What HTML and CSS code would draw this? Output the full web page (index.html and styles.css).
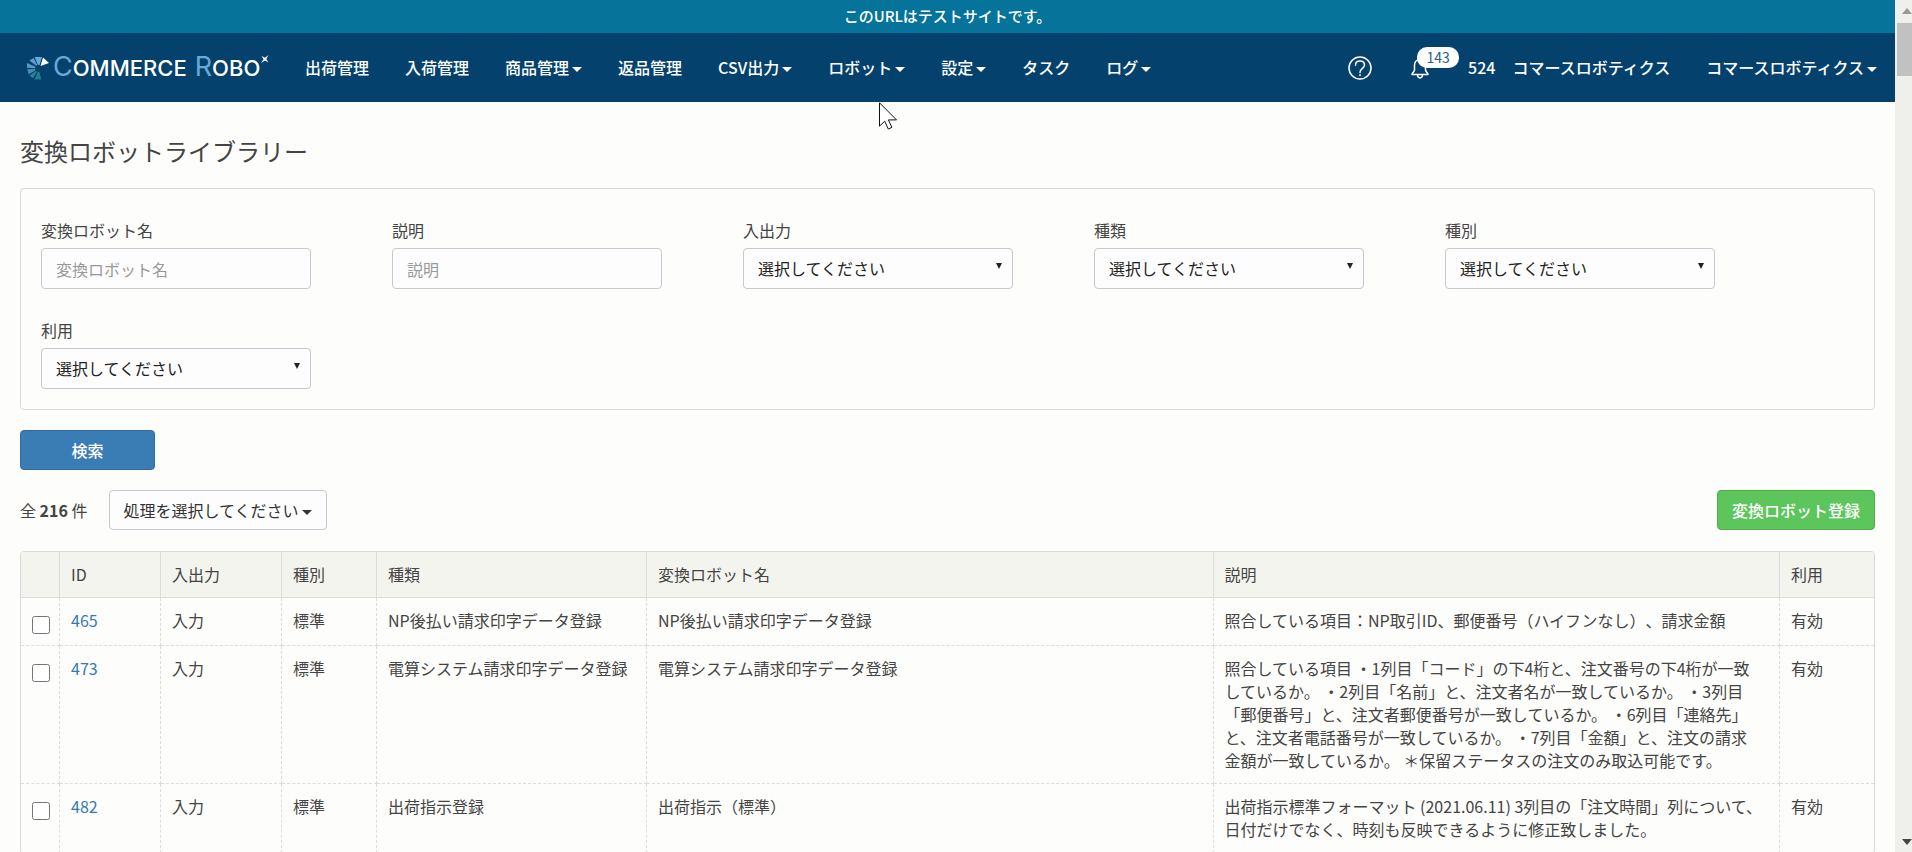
FILE: index.html
```html
<!DOCTYPE html>
<html lang="ja">
<head>
    <meta charset="UTF-8">
    <meta name="viewport" content="width=device-width, initial-scale=1.0">
    <title>変換ロボットライブラリー</title>
    <link rel="stylesheet" href="styles.css">
</head>
<body>
    <div class="page">
        <div class="test-banner">このURLはテストサイトです。</div>

        <!-- Navigation -->
        <header class="navbar">
            <a href="#" class="brand">
                <svg class="brand-mark" width="24" height="24" viewBox="0 0 24 24">
                    <path fill="#6aa8d8" d="M8.500 1h7.500l-2.500 8h-1.500z"/>
                    <path fill="#5f9fd0" d="M3.500 4.500L7.500 2l3.800 7-1 .8z"/>
                    <path fill="#5a98c4" d="M1 7l8.500 3.800-.5 1.500-8-.5z"/>
                    <path fill="#4a8cb8" d="M1.200 13.300l7.800-.3.200 1.500L2.500 18.300z"/>
                    <path fill="#2f8296" d="M3.500 19.800l6.300-4.800 1.200.8L7 22.300z"/>
                    <path fill="#1f7f90" d="M8.500 23.500l3.300-7.500h1.500l2 7.500z"/>
                    <path fill="#fff" d="M17 1.500L23 7l-8.500 3z"/>
                </svg>
                <span class="brand-name"><span><b>C</b>OMMERCE</span> <span><b>R</b>OBO</span></span>
                <svg class="brand-star" width="8" height="8" viewBox="0 0 8 8"><path fill="#fff" d="M.5 1L4 2.800 7.500 0 5.300 4 7.500 7.500 4 5.500 0 8 2.600 4.200z"/></svg>
            </a>
            <nav class="nav-menu">
                <a href="#">出荷管理</a>
                <a href="#">入荷管理</a>
                <a href="#">商品管理<i class="caret"></i></a>
                <a href="#">返品管理</a>
                <a href="#">CSV出力<i class="caret"></i></a>
                <a href="#">ロボット<i class="caret"></i></a>
                <a href="#">設定<i class="caret"></i></a>
                <a href="#">タスク</a>
                <a href="#">ログ<i class="caret"></i></a>
            </nav>
            <div class="nav-right">
                <a href="#" class="help" aria-label="ヘルプ">
                    <svg width="24" height="24" viewBox="0 0 24 24" fill="none" stroke="#fff" stroke-width="1.500">
                        <circle cx="12" cy="12" r="11"/>
                        <path stroke-linecap="round" d="M7.500 9.200C7.500 6.500 9.500 5 12 5s4.500 1.600 4.500 4.100c0 3.400-4.500 3.200-4.500 7.400"/>
                        <path stroke-linecap="round" d="M12 18.800v.8"/>
                    </svg>
                </a>
                <a href="#" class="bell" aria-label="お知らせ">
                    <svg width="20" height="22" viewBox="0 0 20 22" fill="none" stroke="#fff" stroke-width="1.500" stroke-linejoin="round">
                        <path d="M10 2.500c-3.500 0-5.500 2.700-5.500 6v4.500c0 1.500-2.500 3-2.500 4.500h16c0-1.500-2.500-3-2.500-4.500V8.500c0-3.300-2-6-5.500-6z"/>
                        <path d="M7.500 17.500c0 4.500 5 4.500 5 0M10 2.500V1"/>
                    </svg>
                    <span class="badge">143</span>
                </a>
                <span class="company-id">524</span>
                <span class="company">コマースロボティクス</span>
                <a href="#" class="account">コマースロボティクス<i class="caret"></i></a>
            </div>
        </header>

        <main class="content">
            <h1>変換ロボットライブラリー</h1>

            <!-- Search form -->
            <form>
                <div class="search-panel">
                    <div class="field">
                        <label for="robotName">変換ロボット名</label>
                        <input type="text" id="robotName" placeholder="変換ロボット名">
                    </div>
                    <div class="field">
                        <label for="description">説明</label>
                        <input type="text" id="description" placeholder="説明">
                    </div>
                    <div class="field">
                        <label for="io">入出力</label>
                        <select id="io"><option>選択してください</option></select>
                    </div>
                    <div class="field">
                        <label for="kind">種類</label>
                        <select id="kind"><option>選択してください</option></select>
                    </div>
                    <div class="field">
                        <label for="category">種別</label>
                        <select id="category"><option>選択してください</option></select>
                    </div>
                    <div class="field">
                        <label for="usage">利用</label>
                        <select id="usage"><option>選択してください</option></select>
                    </div>
                </div>
                <button type="submit" class="btn btn-primary">検索</button>
            </form>

            <div class="toolbar">
                <span class="total">全 <strong>216</strong> 件</span>
                <button type="button" class="btn btn-default">処理を選択してください<i class="caret"></i></button>
                <button type="button" class="btn btn-success">変換ロボット登録</button>
            </div>

            <!-- Robot list -->
            <div class="table-wrap">
                <table>
                    <colgroup>
                        <col class="col-check">
                        <col class="col-id">
                        <col class="col-io">
                        <col class="col-category">
                        <col class="col-kind">
                        <col>
                        <col>
                        <col class="col-usage">
                    </colgroup>
                    <thead>
                        <tr>
                            <th></th>
                            <th>ID</th>
                            <th>入出力</th>
                            <th>種別</th>
                            <th>種類</th>
                            <th>変換ロボット名</th>
                            <th>説明</th>
                            <th>利用</th>
                        </tr>
                    </thead>
                    <tbody>
                        <tr>
                            <td class="check"><input type="checkbox" aria-label="465"></td>
                            <td><a href="#">465</a></td>
                            <td>入力</td>
                            <td>標準</td>
                            <td>NP後払い請求印字データ登録</td>
                            <td>NP後払い請求印字データ登録</td>
                            <td>照合している項目：NP取引ID、郵便番号（ハイフンなし）、請求金額</td>
                            <td>有効</td>
                        </tr>
                        <tr>
                            <td class="check"><input type="checkbox" aria-label="473"></td>
                            <td><a href="#">473</a></td>
                            <td>入力</td>
                            <td>標準</td>
                            <td>電算システム請求印字データ登録</td>
                            <td>電算システム請求印字データ登録</td>
                            <td>照合している項目 ・1列目「コード」の下4桁と、注文番号の下4桁が一致<br>しているか。 ・2列目「名前」と、注文者名が一致しているか。 ・3列目<br>「郵便番号」と、注文者郵便番号が一致しているか。 ・6列目「連絡先」<br>と、注文者電話番号が一致しているか。 ・7列目「金額」と、注文の請求<br>金額が一致しているか。 ＊保留ステータスの注文のみ取込可能です。</td>
                            <td>有効</td>
                        </tr>
                        <tr>
                            <td class="check"><input type="checkbox" aria-label="482"></td>
                            <td><a href="#">482</a></td>
                            <td>入力</td>
                            <td>標準</td>
                            <td>出荷指示登録</td>
                            <td>出荷指示（標準）</td>
                            <td>出荷指示標準フォーマット (2021.06.11) 3列目の「注文時間」列について、日付だけでなく、時刻も反映できるように修正致しました。</td>
                            <td>有効</td>
                        </tr>
                    </tbody>
                </table>
            </div>
        </main>
    </div>

    <div class="scrollbar">
        <i class="arrow-up"></i>
        <div class="thumb"></div>
        <i class="arrow-down"></i>
    </div>

    <svg class="cursor" width="19" height="28" viewBox="0 0 19 28">
        <path fill="#fff" stroke="#111" d="M.5.8v23.400l5.200-5 3.600 7.800 3.600-1.600-3.500-7.500h8.100z"/>
    </svg>
</body>
</html>
```
FILE: styles.css
```css
* {
    box-sizing: border-box;
}

body {
    margin: 0;
    display: flex;
    height: 100vh;
    overflow: hidden;
    font-family: "Noto Sans CJK JP", sans-serif;
    font-size: 16px;
    line-height: 23px;
    text-spacing-trim: space-all;
    color: #444;
    background-color: #fdfdfb;
}

a {
    color: #337ab7;
    text-decoration: none;
}

.page {
    flex: 1;
    min-width: 0;
    overflow: hidden;
}

.caret {
    display: inline-block;
    margin-left: 3px;
    vertical-align: middle;
    border-top: 5px solid;
    border-left: 5px solid transparent;
    border-right: 5px solid transparent;
}

/* Header */
.test-banner {
    padding: 4px 5px 6px;
    background-color: #05739a;
    color: #fff;
    font-size: 15px;
    font-weight: 500;
    text-align: center;
}

.navbar {
    display: flex;
    align-items: center;
    height: 69px;
    padding: 0 18px 0 26px;
    background-color: #04426d;
    color: #fff;
    font-weight: 500;
}

.navbar a {
    color: #fff;
    white-space: nowrap;
}

.brand {
    display: flex;
    align-items: center;
    width: 261px;
}

.brand-name {
    display: flex;
    gap: 8px;
    margin-left: 3px;
    font-family: Inter, sans-serif;
    font-size: 22px;
    line-height: 30px;
}

.brand-name b {
    color: #6aa8d8;
    font-size: 27px;
    font-weight: 400;
}

.brand-star {
    align-self: flex-start;
    margin: 3px 0 0 1px;
}

.nav-menu {
    display: flex;
}

.nav-menu a {
    padding: 0 18px;
}

.nav-right {
    display: flex;
    align-items: center;
    margin-left: auto;
}

.help,
.bell {
    display: flex;
}

.bell {
    position: relative;
    margin: 0 38px;
}

.badge {
    position: absolute;
    top: -10px;
    left: 7px;
    width: 42px;
    border-radius: 10px;
    background-color: #fff;
    color: #2a6080;
    font-size: 14px;
    font-weight: 400;
    line-height: 21px;
    text-align: center;
}

.company {
    margin: 0 36px 0 17px;
}

/* Content */
.content {
    padding: 31px 20px;
}

h1 {
    margin: 0 0 19px;
    font-size: 24px;
    font-weight: 400;
    line-height: 36px;
}

.search-panel {
    display: flex;
    flex-wrap: wrap;
    gap: 30px 81px;
    padding: 30px 20px 20px;
    border: 1px solid #d8d8dc;
    border-radius: 4px;
}

.field {
    width: 270px;
}

.field label {
    display: block;
    margin-bottom: 6px;
}

.field input,
.field select {
    display: block;
    width: 100%;
    height: 41px;
    padding: 0 14px;
    border: 1px solid #c8c8d0;
    border-radius: 4px;
    background-color: #fdfdfd;
    color: #222;
    font: inherit;
}

.field input::placeholder {
    color: #999;
}

.field select {
    appearance: none;
    background-image: url("data:image/svg+xml,%3Csvg xmlns='http://www.w3.org/2000/svg' width='6' height='6'%3E%3Cpath d='M0 0h6L3 6z' fill='%23222'/%3E%3C/svg%3E");
    background-repeat: no-repeat;
    background-position: right 10px top 14px;
}

.btn {
    height: 40px;
    padding: 0 14px;
    border: 1px solid transparent;
    border-radius: 4px;
    font: inherit;
}

.btn-primary {
    width: 135px;
    margin-top: 20px;
    border-color: #2e6da4;
    background-color: #3a7cb4;
    color: #fff;
    font-weight: 500;
}

.btn-default {
    border-color: #c8c8d0;
    background-color: #fdfdfd;
    color: #333;
}

.btn-success {
    margin-left: auto;
    border-color: #4cae4c;
    background-color: #5cc55c;
    color: #fff;
    font-weight: 500;
}

.toolbar {
    display: flex;
    align-items: center;
    gap: 21px;
    margin: 20px 0 21px;
}

/* Table */
.table-wrap {
    overflow: hidden;
    border: 1px solid #d8d8dc;
    border-radius: 4px;
}

table {
    width: 100%;
    table-layout: fixed;
    border-collapse: separate;
    border-spacing: 0;
}

th,
td {
    padding: 11px 8px 11px 11px;
    border-right: 1px solid #dcdcdc;
    border-bottom: 1px solid #dcdcdc;
    font-weight: 400;
    text-align: left;
    vertical-align: top;
}

th {
    background-color: #f4f4ef;
}

td {
    border-style: dashed;
    border-width: 0 1px 1px 0;
}

th:last-child,
td:last-child {
    border-right: 0;
}

td.check {
    padding: 17px 0 11px 11px;
}

.check input {
    display: block;
    width: 18px;
    height: 18px;
    margin: 1px 0 0;
}

.col-check {
    width: 39px;
}

.col-id {
    width: 101px;
}

.col-io {
    width: 121px;
}

.col-category {
    width: 95px;
}

.col-kind {
    width: 270px;
}

.col-usage {
    width: 94px;
}

/* Scrollbar */
.scrollbar {
    display: flex;
    flex-direction: column;
    align-items: flex-end;
    width: 17px;
    padding: 8px 0 7px 2px;
    background-color: #efefec;
}

.arrow-up,
.arrow-down {
    border-left: 5px solid transparent;
    border-right: 5px solid transparent;
}

.arrow-up {
    border-bottom: 6px solid #999;
}

.arrow-down {
    margin-top: auto;
    border-top: 6px solid #444;
}

.thumb {
    width: 100%;
    height: 53px;
    margin-top: 9px;
    background-color: #c1c1c1;
}

.cursor {
    position: absolute;
    top: 102px;
    left: 879px;
}
```
